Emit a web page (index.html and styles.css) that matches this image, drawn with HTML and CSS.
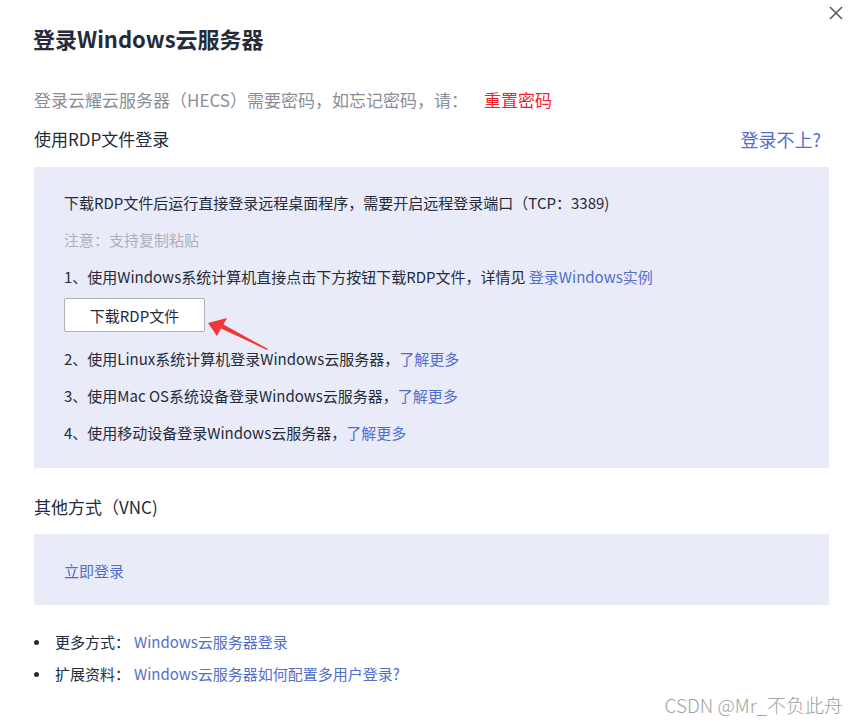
FILE: index.html
```html
<!DOCTYPE html>
<html lang="zh">
<head>
<meta charset="utf-8">
<link rel="stylesheet" href="styles.css">
</head>
<body>
<div class="dialog">
  <button class="close" aria-label="close">
    <svg width="14" height="14" viewBox="0 0 14 14"><path d="M1 1L13 13M13 1L1 13" stroke="#575d6c" stroke-width="1.6" fill="none"/></svg>
  </button>
  <h1 class="title">登录Windows云服务器</h1>
  <p class="sub">登录云耀云服务器（HECS）需要密码，如忘记密码，请：<span class="red">重置密码</span></p>
  <div class="sec-head">
    <span>使用RDP文件登录</span>
    <a class="link big">登录不上?</a>
  </div>
  <div class="box box-rdp">
    <p class="row">下载RDP文件后运行直接登录远程桌面程序，需要开启远程登录端口（TCP：3389)</p>
    <p class="row muted">注意：支持复制粘贴</p>
    <p class="row">1、使用Windows系统计算机直接点击下方按钮下载RDP文件，详情见 <a class="link">登录Windows实例</a></p>
    <div class="btn-wrap">
      <button class="btn">下载RDP文件</button>
      <svg class="arrow" width="66" height="36" viewBox="0 0 66 36"><path d="M2 7L21 2L17.5 8.5L62 33L61 34L15 12.5L11 20Z" fill="#f2363a"/></svg>
    </div>
    <p class="row">2、使用Linux系统计算机登录Windows云服务器，<a class="link">了解更多</a></p>
    <p class="row">3、使用Mac OS系统设备登录Windows云服务器，<a class="link">了解更多</a></p>
    <p class="row">4、使用移动设备登录Windows云服务器，<a class="link">了解更多</a></p>
  </div>
  <div class="sec-head sec2"><span>其他方式（VNC)</span></div>
  <div class="box box-vnc">
    <p class="row"><a class="link">立即登录</a></p>
  </div>
  <ul class="more">
    <li><span class="lab">更多方式：</span><a class="link">Windows云服务器登录</a></li>
    <li><span class="lab">扩展资料：</span><a class="link">Windows云服务器如何配置多用户登录?</a></li>
  </ul>
</div>
<div class="watermark">CSDN @Mr_不负此舟</div>
</body>
</html>
```
FILE: styles.css
```css
* { box-sizing: border-box; }
html, body { margin: 0; padding: 0; background: #fff; }
body {
  font-family: "Noto Sans CJK SC", "Open Sans", sans-serif;
  color: #252b3a;
  width: 859px;
  height: 726px;
  overflow: hidden;
  position: relative;
}
.dialog { padding: 0 30px 0 34px; position: relative; }
.close {
  position: absolute; top: 6px; right: 16px;
  border: 0; background: none; padding: 0; width: 14px; height: 14px;
}
.close svg { display: block; }
.title {
  margin: 0; padding-top: 23px;
  font-size: 22px; line-height: 30px; font-weight: 700;
  margin-left: -1px;
}
.sub {
  margin: 35px 0 0; font-size: 17px; line-height: 24px; color: #8a8e99;
}
.red { color: #f5222d; margin-left: 16px; }
.sec-head {
  margin-top: 15px; display: flex; justify-content: space-between; align-items: center;
  font-size: 17px; line-height: 24px;
}
.link { color: #526ecc; text-decoration: none; }
.big { font-size: 18px; margin-right: 8px; }
.box {
  background: #e9ecf8;
  margin-top: 16px;
  padding: 26px 30px 25px;
}
.row { margin: 0; font-size: 15px; line-height: 20px; }
.row + .row { margin-top: 17px; }
.muted { color: #adb0b8; }
.btn-wrap { margin: 11px 0 17px; position: relative; height: 34px; }
.btn {
  width: 141px; height: 34px; display: block;
  background: #fff; border: 1px solid #adb0b8; border-radius: 2px;
  font-family: inherit; font-size: 15px; color: #252b3a; padding: 0;
}
.arrow { position: absolute; left: 142px; top: 18px; }
.sec2 { margin-top: 27px; }
.box-vnc { margin-top: 15px; padding: 27px 30px 24px; }
.more {
  margin: 27px 0 0; padding: 0; list-style: none;
  font-size: 15px; line-height: 20px;
}
.more li { display: flex; align-items: center; }
.more li::before {
  content: ""; width: 5px; height: 5px; border-radius: 50%;
  background: #252b3a; margin: 0 16px 0 0;
}
.more li + li { margin-top: 12px; }
.lab { margin-right: 4px; }
.watermark {
  position: absolute; right: 16px; top: 692px;
  font-size: 19px; line-height: 26px; color: #a3a3a3;
  font-family: "Noto Sans CJK SC", sans-serif; font-weight: 300;
}
```
